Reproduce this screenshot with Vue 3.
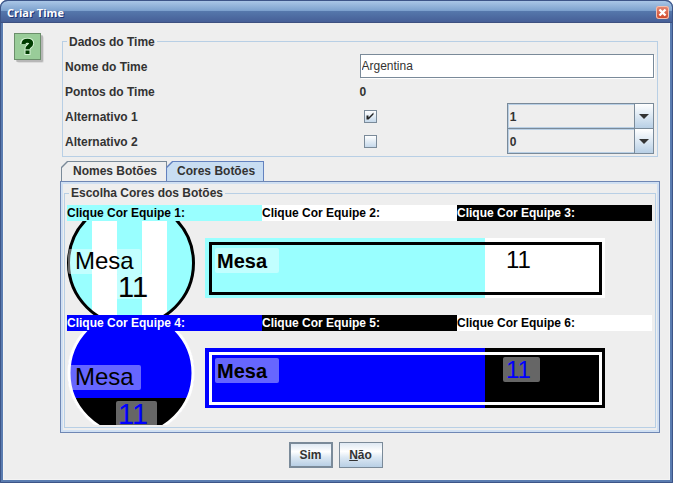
<script setup>
import { ref } from 'vue'

const name = ref('Argentina')
const points = ref(0)
const alternatives = ref([
  { id: 'alt1', label: 'Alternativo 1', checked: true, value: '1' },
  { id: 'alt2', label: 'Alternativo 2', checked: false, value: '0' },
])
const tabs = ['Nomes Botões', 'Cores Botões']
const activeTab = ref(1)

const kits = [
  {
    id: 'home',
    swatches: [
      { n: 1, tone: 'aqua' },
      { n: 2, tone: 'white' },
      { n: 3, tone: 'black' },
    ],
    main: '#99ffff',
    second: '#ffffff',
    ring: '#000000',
    ink: '#000000',
    stripes: true,
    radius: 62.5,
    nameY: 28,
    numberY: 53,
  },
  {
    id: 'away',
    swatches: [
      { n: 4, tone: 'blue' },
      { n: 5, tone: 'black' },
      { n: 6, tone: 'white' },
    ],
    main: '#0000ff',
    second: '#000000',
    ring: '#ffffff',
    ink: '#0000ff',
    stripes: false,
    radius: 62,
    nameY: 34,
    numberY: 70,
  },
]
</script>

<template>
  <main class="window">
    <header class="titlebar">
      <h1>Criar Time</h1>
      <button class="close" type="button" aria-label="Fechar">
        <svg width="13" height="13" viewBox="0 0 13 13">
          <path d="M3.5 3.5 L9.5 9.5 M9.5 3.5 L3.5 9.5" stroke="#fff" stroke-width="2.4" />
        </svg>
      </button>
    </header>

    <div class="body">
      <svg class="question" width="34" height="34" viewBox="0 0 34 34">
        <rect x="3" y="3" width="27" height="27" rx="2" fill="#000" opacity=".08" />
        <rect x="2" y="2" width="27" height="27" rx="1" fill="#000" opacity=".16" />
        <rect x=".5" y=".5" width="26" height="26" fill="#99cc99" stroke="#6b8f6b" />
        <g fill="none" stroke="#d5f2d5" stroke-width="6">
          <path d="M9 11 C9 8.500 11 7.800 13.500 7.800 C16.200 7.800 17.200 9 17.200 10.500 C17.200 13 13.500 12.800 13.500 16.500" />
          <path d="M13.500 16.500 V22" />
        </g>
        <g fill="none" stroke="#003c00" stroke-width="4">
          <path d="M9.500 11 C9.500 8.500 11 7.800 13.500 7.800 C16.200 7.800 17.200 9 17.200 10.500 C17.200 13 13.500 12.800 13.500 16.200" />
          <path d="M13.500 17.500 V21" />
        </g>
      </svg>

      <div class="content">
        <fieldset class="group data">
          <legend>Dados do Time</legend>
          <div class="row">
            <label for="team-name">Nome do Time</label>
            <input id="team-name" v-model="name" class="text" type="text" />
          </div>
          <div class="row">
            <span class="caption">Pontos do Time</span>
            <output class="caption">{{ points }}</output>
          </div>
          <div v-for="alt in alternatives" :key="alt.id" class="row">
            <label :for="alt.id">{{ alt.label }}</label>
            <div class="pair">
              <input :id="alt.id" v-model="alt.checked" class="check" type="checkbox" />
              <span class="combo">
                <select v-model="alt.value" :aria-label="alt.label">
                  <option>0</option>
                  <option>1</option>
                </select>
                <span class="arrow">
                  <svg width="10" height="5" viewBox="0 0 10 5"><path d="M0 0 H10 L5 5 Z" fill="#333" /></svg>
                </span>
              </span>
            </div>
          </div>
        </fieldset>

        <div class="tabs" role="tablist">
          <button
            v-for="(tab, i) in tabs"
            :key="tab"
            class="tab"
            :class="{ active: i === activeTab }"
            type="button"
            role="tab"
            :aria-selected="i === activeTab"
            @click="activeTab = i"
          ><span>{{ tab }}</span></button>
        </div>

        <section class="panel" role="tabpanel">
          <fieldset class="group colors">
            <legend>Escolha Cores dos Botões</legend>
            <template v-for="kit in kits" :key="kit.id">
              <div class="swatches">
                <button
                  v-for="s in kit.swatches"
                  :key="s.n"
                  class="swatch"
                  :class="s.tone"
                  type="button"
                >Clique Cor Equipe {{ s.n }}:</button>
              </div>
              <div class="preview">
                <svg class="disc" width="128" height="94" viewBox="0 0 128 94">
                  <svg width="128" height="94">
                    <clipPath :id="kit.id + '-disc'"><circle cx="64" cy="42" :r="kit.radius + 1" /></clipPath>
                    <g :clip-path="`url(#${kit.id}-disc)`">
                      <rect width="128" height="94" :fill="kit.main" />
                      <template v-if="kit.stripes">
                        <rect x="25" width="25" height="94" :fill="kit.second" />
                        <rect x="75" width="25" height="94" :fill="kit.second" />
                      </template>
                      <rect v-else y="67" width="128" height="27" :fill="kit.second" />
                    </g>
                    <circle cx="64" cy="42" :r="kit.radius" fill="none" :stroke="kit.ring" stroke-width="3" />
                    <g :clip-path="`url(#${kit.id}-disc)`">
                      <rect x="1" :y="kit.nameY" width="73" height="25" rx="2" fill="#fff" opacity=".4" />
                    </g>
                    <rect x="49" :y="kit.numberY" width="41" height="25" rx="2" fill="#fff" opacity=".4" />
                  </svg>
                  <text x="8" :y="kit.nameY + 20" font-size="24">Mesa</text>
                  <text x="51" :y="kit.numberY + 23" font-size="29" :fill="kit.ink">11</text>
                </svg>
                <svg width="400" height="60" viewBox="0 0 400 60">
                  <rect width="280" height="60" :fill="kit.main" />
                  <rect x="280" width="120" height="60" :fill="kit.second" />
                  <rect x="5.500" y="5.500" width="390" height="50" fill="none" :stroke="kit.ring" stroke-width="3" />
                  <rect x="10" y="10" width="64" height="25" rx="2" fill="#fff" opacity=".4" />
                  <rect x="298" y="9" width="37" height="25" rx="2" fill="#fff" opacity=".4" />
                  <text class="strong" x="12" y="30" font-size="20">Mesa</text>
                  <text x="301" y="30" font-size="24" :fill="kit.ink">11</text>
                </svg>
              </div>
            </template>
          </fieldset>
        </section>
      </div>
    </div>

    <footer class="actions">
      <button class="push default" type="button">Sim</button>
      <button class="push" type="button"><u>N</u>ão</button>
    </footer>
  </main>
</template>

<style>
body {
  margin: 0;
  background: #fff;
}
</style>

<style scoped>
* {
  box-sizing: border-box;
}
.window {
  display: flex;
  flex-direction: column;
  min-height: 100vh;
  border: 3px solid #5a7cb0;
  border-top: 0;
  border-radius: 7px 7px 0 0;
  background: #eee;
  color: #333;
  font: bold 12px/16px "Liberation Sans", Arial, sans-serif;
  box-shadow: inset 0 0 0 1px #f4f4f4;
  outline: 1px solid #3d5588;
  outline-offset: -1px;
}
button,
input,
select {
  font: inherit;
  color: inherit;
  margin: 0;
}
.titlebar {
  display: flex;
  align-items: center;
  justify-content: space-between;
  height: 23px;
  margin: 0 -2px;
  padding: 2px 3px 0 6px;
  border-top: 1px solid #3d5588;
  border-bottom: 1px solid #3d5080;
  border-radius: 7px 7px 0 0;
  background: linear-gradient(#a9c6e6 0, #7fa3cf 45%, #5577ab 50%, #465f97 100%);
}
h1 {
  margin: 0;
  color: #fff;
  font: bold 11px/16px "Open Sans", "Noto Sans", sans-serif;
  text-shadow: 1px 1px 0 #1f3577;
}
.close {
  display: flex;
  width: 13px;
  height: 13px;
  padding: 0;
  border: 0;
  border-radius: 3px;
  background: linear-gradient(#e58b76, #cf4527);
  box-shadow: inset 0 0 0 1px #f3c0b0;
}
.body {
  display: flex;
  gap: 12px;
  padding: 10px 10px 0 11px;
}
.question {
  flex: none;
}
.content {
  flex: 1;
  min-width: 0;
}
.group {
  min-width: 0;
  margin: 0;
  padding: 0;
  border: 1px solid #b8cfe5;
}
legend {
  margin-left: 3px;
  padding: 1px 2px;
  line-height: 14px;
}
.data {
  margin: 0 2px;
  padding: 4px 3px 3px 2px;
}
.data legend {
  padding: 2px 2px 0;
}
.group legend {
  margin-left: 2px;
}
.row {
  display: grid;
  grid-template-columns: 1fr 1fr;
  align-items: center;
  height: 25px;
}
label,
.caption {
  padding-top: 2px;
}
.text {
  width: 100%;
  height: 24px;
  padding: 1px 1px 0;
  border: 1px solid #7a8a99;
  background: #fff;
  box-shadow: 1px 1px 0 #fff;
  font-weight: normal;
}
.pair {
  display: grid;
  grid-template-columns: 1fr 1fr;
  align-items: center;
}
.check {
  width: 13px;
  height: 13px;
  margin-left: 4px;
  appearance: none;
  border: 1px solid #7a8a99;
  background: linear-gradient(#fff, #c5d8ea);
}
.check:checked::before {
  content: "";
  display: block;
  width: 11px;
  height: 11px;
  background: #222;
  clip-path: polygon(2px 5px, 4px 5px, 4px 7px, 8px 3px, 9px 2px, 9px 4px, 4px 9px, 2px 9px);
}
.combo {
  display: flex;
  height: 26px;
  border: 1px solid #7a8a99;
  box-shadow: inset 0 1px 0 #b8cfe5, inset 1px 0 0 #b8cfe5, inset 0 -1px 0 #b8cfe5;
}
.combo select {
  flex: 1;
  min-width: 0;
  padding: 2px 2px 0;
  border: 0;
  background: transparent;
  appearance: none;
}
.arrow {
  display: flex;
  align-items: center;
  justify-content: center;
  width: 19px;
  border-left: 1px solid #7a8a99;
  background: linear-gradient(#fff, #dce8f3 50%, #b8cfe5);
  pointer-events: none;
}
.tabs {
  display: flex;
  margin-top: 4px;
  padding-left: 1px;
}
.tab {
  height: 20px;
  margin-right: -1px;
  padding: 1px;
  border: 0;
  background: #7a8a99;
  clip-path: polygon(6px 0, 100% 0, 100% 100%, 0 100%, 0 6px);
}
.tab span {
  display: block;
  height: 19px;
  padding: 0 9px 0 11px;
  background: #eee;
  line-height: 18px;
  clip-path: polygon(6px 0, 100% 0, 100% 100%, 0 100%, 0 6px);
}
.tab.active {
  background: #6382bf;
}
.tab.active span {
  padding: 0 8px 0 10px;
  background: #c8ddf2;
}
.panel {
  padding: 3px 3px 4px;
  border: 1px solid #6f87b4;
  background: #eee;
  box-shadow: inset 0 0 0 2px #d0e0f3;
}
.colors {
  padding: 4px 3px 2px 2px;
}
.swatches {
  display: grid;
  grid-template-columns: repeat(3, 1fr);
}
.swatch {
  height: 16px;
  padding: 0;
  border: 0;
  text-align: left;
  line-height: 16px;
  white-space: nowrap;
}
.aqua {
  background: #9ff;
  color: #000;
}
.white {
  background: #fff;
  color: #000;
}
.black {
  background: #000;
  color: #fff;
}
.blue {
  background: #00f;
  color: #fff;
}
.preview {
  display: flex;
  align-items: center;
  gap: 10px;
}
.preview > svg {
  display: block;
  flex: none;
}
.preview .disc {
  overflow: visible;
}
.preview text {
  font-weight: normal;
}
.preview .strong {
  font-weight: bold;
}
.actions {
  display: flex;
  justify-content: center;
  gap: 6px;
  padding: 9px 2px 9px 0;
}
.push {
  width: 44px;
  height: 26px;
  padding: 0;
  border: 1px solid #7a8a99;
  background: linear-gradient(#dfe9f3, #fff 35%, #dce8f3 60%, #b8cfe5);
}
.default {
  border-width: 2px;
}
</style>
